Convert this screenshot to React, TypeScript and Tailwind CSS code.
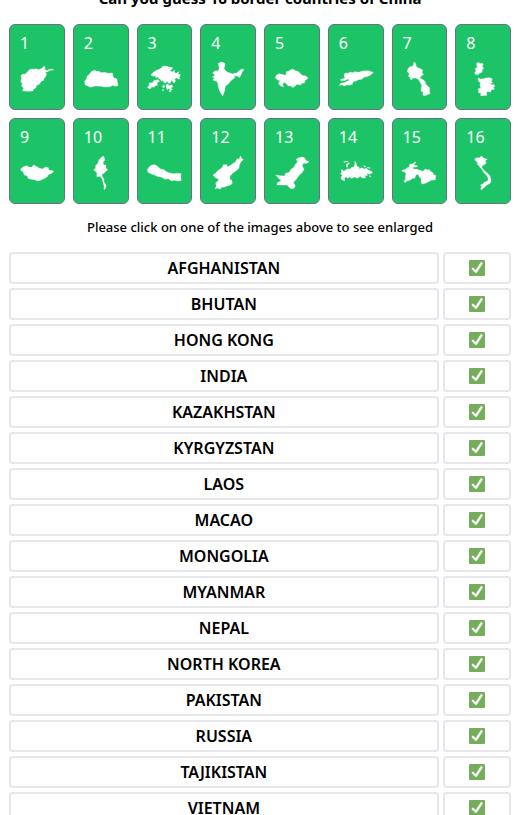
import React from "react";

const shapes = [
  {
    name: "Afghanistan",
    viewBox: "55 180 108 108",
    d: "M61 227 L66 222 L72 223 L80 217 L86 209 L94 207 L101 208 L107 206 L113 209 L121 207 L127 201 L131 199 L134 202 L132 208 L138 212 L146 208 L157 207 L158 210 L148 211 L141 215 L133 217 L138 222 L134 231 L130 235 L129 241 L120 245 L117 252 L108 256 L105 264 L98 268 L97 273 L80 274 L65 272 L69 264 L63 259 L64 250 L60 243 L63 236 Z",
  },
  {
    name: "Bhutan",
    viewBox: "246 180 108 108",
    d: "M251 244 L256 238 L258 229 L266 222 L272 214 L280 211 L288 214 L294 214 L300 218 L310 217 L322 220 L334 219 L336 229 L340 235 L348 236 L349 245 L351 257 L343 259 L335 256 L327 260 L313 261 L299 259 L283 258 L268 262 L259 257 L252 254 Z",
  },
  {
    name: "Hong Kong",
    viewBox: "48 180 108 108",
    d: "M63 225 L70 217 L79 211 L85 209 L94 204 L99 198 L109 198 L118 202 L128 203 L126 208 L119 211 L127 216 L134 210 L132 217 L139 220 L148 215 L143 222 L150 226 L145 230 L151 236 L144 237 L139 233 L134 237 L137 244 L132 249 L124 241 L121 250 L115 249 L111 242 L108 249 L101 247 L99 241 L94 244 L91 237 L85 236 L86 230 L77 233 L78 227 L69 229 Z M52 263 L58 255 L57 249 L68 248 L71 242 L83 239 L89 243 L81 249 L83 256 L76 257 L72 262 L65 260 L62 266 Z M97 259 L102 254 L104 261 L100 264 Z M108 255 L114 252 L117 257 L125 254 L129 260 L122 264 L128 269 L121 270 L117 265 L112 269 L109 263 Z M137 222 L142 218 L145 225 L151 223 L149 231 L141 229 Z M97 269 L101 269 L100 272 L97 272 Z M117 272 L123 271 L122 275 L118 275 Z",
  },
  {
    name: "India",
    viewBox: "240 180 108 108",
    d: "M265 190 L272 187 L279 187 L285 191 L284 199 L282 205 L285 210 L291 216 L300 219 L309 222 L314 219 L321 219 L326 213 L336 207 L342 209 L336 217 L334 223 L328 233 L324 228 L319 229 L313 226 L314 233 L308 238 L301 244 L295 252 L286 259 L284 272 L278 288 L272 279 L266 265 L263 249 L259 242 L253 243 L249 238 L256 235 L247 231 L255 226 L248 219 L254 213 L265 212 L268 204 L266 197 Z",
  },
  {
    name: "Kazakhstan",
    viewBox: "41 180 108 108",
    d: "M45 234 L48 226 L56 221 L65 223 L73 226 L79 222 L77 216 L86 213 L94 208 L102 209 L105 213 L113 214 L119 220 L125 226 L136 228 L143 233 L140 238 L135 240 L132 249 L124 250 L121 255 L110 253 L105 257 L98 263 L90 257 L84 258 L76 249 L70 247 L67 254 L70 260 L61 258 L54 250 L60 242 L52 240 Z",
  },
  {
    name: "Kyrgyzstan",
    viewBox: "231 180 108 108",
    d: "M237 239 L244 237 L252 234 L249 225 L253 219 L262 220 L267 216 L274 218 L282 215 L294 217 L304 213 L321 212 L330 215 L337 217 L330 224 L321 229 L309 232 L302 238 L292 239 L285 243 L276 245 L274 253 L265 256 L257 254 L252 258 L243 255 L235 256 L239 250 L250 248 L257 244 L266 241 L261 237 L250 242 L241 242 Z",
  },
  {
    name: "Laos",
    viewBox: "36 180 108 108",
    d: "M56 209 L61 201 L67 199 L70 201 L73 194 L75 186 L80 190 L82 200 L89 204 L96 207 L101 210 L99 218 L104 223 L97 228 L92 233 L102 239 L109 245 L110 253 L117 259 L122 264 L121 274 L124 280 L114 285 L104 287 L101 282 L103 276 L96 273 L97 265 L98 256 L93 246 L88 238 L80 234 L72 235 L66 240 L64 233 L58 229 L61 221 L55 215 Z",
  },
  {
    name: "Macao",
    viewBox: "228 180 108 108",
    d: "M262 191 L268 187 L274 191 L279 189 L283 194 L279 199 L284 204 L280 209 L279 217 L272 219 L267 224 L258 223 L257 217 L262 213 L258 207 L265 201 Z M267 234 L274 237 L284 236 L291 234 L303 233 L310 237 L307 243 L311 248 L303 251 L309 255 L315 253 L317 260 L312 263 L317 267 L307 269 L305 276 L295 275 L292 279 L294 286 L275 287 L276 280 L269 278 L268 266 L276 265 L273 257 L274 246 L269 245 Z",
  },
  {
    name: "Mongolia",
    viewBox: "55 126 108 108",
    d: "M60 171 L67 165 L78 161 L85 165 L94 166 L98 159 L109 164 L116 169 L125 171 L135 165 L143 167 L145 175 L159 177 L154 183 L143 188 L139 195 L130 200 L119 205 L110 207 L102 203 L91 202 L82 199 L80 192 L70 188 L68 179 L61 176 Z",
  },
  {
    name: "Myanmar",
    viewBox: "246 126 108 108",
    d: "M278 174 L284 168 L284 160 L290 155 L294 143 L300 137 L306 132 L310 137 L311 145 L306 151 L308 159 L315 159 L314 167 L320 174 L313 179 L309 184 L303 186 L304 194 L309 202 L309 210 L315 219 L313 230 L309 233 L309 221 L306 209 L302 199 L297 193 L287 194 L288 184 L283 178 Z",
  },
  {
    name: "Nepal",
    viewBox: "48 126 108 108",
    d: "M52 173 L57 165 L66 159 L75 158 L84 164 L91 171 L102 173 L109 179 L120 183 L131 185 L144 184 L153 185 L152 194 L154 205 L145 207 L134 205 L124 206 L115 200 L105 202 L96 196 L84 194 L74 189 L64 186 L54 181 Z",
  },
  {
    name: "North Korea",
    viewBox: "240 126 108 108",
    d: "M249 189 L257 184 L263 176 L271 171 L278 165 L280 158 L290 158 L292 164 L300 161 L308 155 L317 149 L321 140 L328 141 L331 132 L335 139 L340 143 L332 150 L328 160 L327 169 L317 177 L308 184 L300 192 L299 201 L305 205 L307 213 L302 219 L292 221 L282 226 L275 225 L271 231 L262 228 L256 231 L259 221 L257 213 L264 207 L266 201 L256 197 Z",
  },
  {
    name: "Pakistan",
    viewBox: "41 126 108 108",
    d: "M46 189 L60 191 L73 192 L76 184 L87 181 L92 172 L101 166 L105 157 L112 150 L108 142 L115 137 L127 135 L134 139 L136 145 L146 149 L139 154 L128 154 L126 163 L131 171 L126 181 L115 191 L108 202 L103 207 L99 211 L105 222 L101 229 L92 230 L85 224 L80 219 L67 219 L50 219 L51 212 L63 206 L55 199 Z",
  },
  {
    name: "Russia",
    viewBox: "231 126 108 108",
    d: "M240 173 L246 174 L248 178 L254 174 L261 170 L267 172 L273 165 L279 166 L282 153 L286 154 L287 163 L294 165 L295 171 L303 167 L309 171 L316 169 L322 174 L333 179 L334 183 L326 186 L318 184 L319 191 L311 190 L314 198 L304 198 L298 193 L289 199 L281 195 L272 199 L265 195 L260 199 L255 194 L250 199 L251 206 L242 203 L240 196 L244 190 L239 186 L242 180 Z M248 149 L260 147 L261 149 L249 151 Z M256 157 L264 152 L266 154 L259 160 L260 166 L257 165 Z M280 148 L285 151 L283 153 Z M307 161 L315 164 L313 166 Z M319 166 L327 167 L328 169 L320 168 Z M324 190 L330 194 L327 195 Z",
  },
  {
    name: "Tajikistan",
    viewBox: "36 126 108 108",
    d: "M39 174 L48 173 L54 168 L60 166 L62 157 L70 156 L80 149 L80 153 L73 158 L87 162 L82 165 L70 166 L73 171 L83 172 L93 175 L102 178 L109 171 L116 174 L121 173 L126 179 L134 184 L132 188 L140 190 L139 203 L126 205 L119 209 L109 214 L99 216 L96 210 L97 202 L90 193 L88 187 L81 188 L77 199 L70 199 L64 204 L54 207 L48 212 L45 206 L50 201 L49 194 L51 185 L46 179 L39 178 Z",
  },
  {
    name: "Vietnam",
    viewBox: "228 126 108 108",
    d: "M257 141 L263 137 L270 138 L278 132 L283 138 L295 142 L288 147 L292 153 L286 158 L280 161 L278 166 L284 174 L291 180 L297 185 L303 192 L306 205 L304 213 L294 219 L289 223 L284 228 L277 234 L275 229 L278 224 L274 219 L281 217 L286 211 L297 206 L297 197 L293 190 L285 183 L280 173 L274 167 L270 161 L265 157 L266 151 L260 147 Z",
  },
];

const CheckMark = () => {
  return (
    <svg viewBox="0 0 36 36" className="h-4 w-4" role="img" aria-label="Correct">
      <rect width="36" height="36" rx="3" fill="#74ad5b" />
      <path
        d="M29.3 5.4a2.2 2.2 0 0 0-3 .6L15.2 23.1l-5.1-4.8a2.2 2.2 0 0 0-3 3.2l7.1 6.6c.5.4 1 .6 1.5.6.7 0 1.3-.3 1.9-1.1L30 8.4a2.2 2.2 0 0 0-.7-3Z"
        fill="#fff"
        stroke="#fff"
      />
    </svg>
  );
};

const App = () => {
  return (
    <main className="h-screen overflow-hidden bg-white pl-[9px] pr-2 font-['Noto_Sans',sans-serif] text-black">
      <h1 className="-mt-3.5 text-center text-[15px] leading-6 font-bold">
        Can you guess 16 border countries of China
      </h1>
      <div className="mt-3.5 grid grid-cols-8 gap-2">
        {shapes.map((shape, index) => (
          <button
            key={shape.name}
            type="button"
            aria-label={`Image ${index + 1}`}
            className="flex h-[86px] flex-col rounded-md border border-gray-500 bg-[#1dc467] pt-1.5 text-left text-white"
          >
            <span className="pl-2.5 text-base leading-6">{index + 1}</span>
            <svg
              viewBox={shape.viewBox}
              className="mt-[5px] h-9 w-9 self-center"
              fill="currentColor"
              stroke="currentColor"
              strokeWidth="1"
              strokeLinejoin="round"
            >
              <path d={shape.d} />
            </svg>
          </button>
        ))}
      </div>
      <p className="mt-[11px] text-center text-[13px] leading-6 font-medium">
        Please click on one of the images above to see enlarged
      </p>
      <ul className="mt-[13px] space-y-1">
        {shapes.map((shape) => (
          <li key={shape.name} className="grid grid-cols-7 gap-1 text-center">
            <div className="col-span-6 h-8 rounded-sm border-2 border-gray-200 text-base leading-7 font-semibold uppercase">
              {shape.name}
            </div>
            <div className="flex h-8 items-center justify-center rounded-sm border-2 border-gray-200">
              <CheckMark />
            </div>
          </li>
        ))}
      </ul>
    </main>
  );
};

export default App;
